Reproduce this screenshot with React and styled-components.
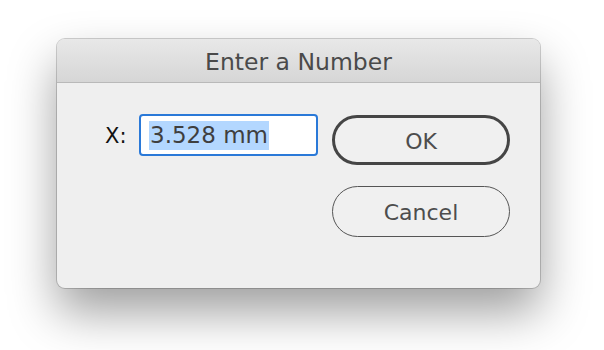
import React from "react";
import styled, { createGlobalStyle } from "styled-components";

const Global = createGlobalStyle`
  html, body { margin: 0; padding: 0; background: #ffffff; }
  body { font-family: "DejaVu Sans", "Open Sans", sans-serif; }
`;

const Page = styled.div`
  width: 604px;
  height: 350px;
  box-sizing: border-box;
  padding: 39px 0 0 57px;
  overflow: hidden;
  background: #ffffff;
`;

const Dialog = styled.div`
  width: 483px;
  height: 249px;
  border-radius: 8px;
  background: #efefef;
  box-shadow: 0 24px 48px rgba(0, 0, 0, 0.38), 0 0 0 1px rgba(0, 0, 0, 0.18);
  display: flex;
  flex-direction: column;
  overflow: hidden;
`;

const TitleBar = styled.div`
  height: 44px;
  flex: none;
  display: flex;
  align-items: center;
  justify-content: center;
  background: linear-gradient(#e8e8e8, #d6d6d6);
  border-bottom: 1px solid #b9b9b9;
  color: #4a4a4a;
  font-size: 23.5px;
  padding-top: 3px;
  box-sizing: border-box;
`;

const Body = styled.div`
  display: flex;
  align-items: flex-start;
  padding: 31px 31px 0 48px;
`;

const Field = styled.div`
  display: flex;
  align-items: center;
  gap: 12px;
  height: 42px;
`;

const Label = styled.label`
  font-size: 21px;
  color: #111;
  width: 22px;
  padding-top: 2px;
`;

const Input = styled.div`
  width: 179px;
  height: 42px;
  box-sizing: border-box;
  border: 2px solid #2a79d8;
  border-radius: 4px;
  background: #ffffff;
  display: flex;
  align-items: center;
  padding-left: 8px;
`;

const Selected = styled.span`
  background: #b3d7ff;
  color: #3f3f3f;
  font-size: 23px;
  line-height: 29px;
  padding: 0 1px;
`;

const Buttons = styled.div`
  margin-left: 14px;
  display: flex;
  flex-direction: column;
  gap: 21px;
`;

const Button = styled.button`
  width: 178px;
  height: ${(p) => (p.$default ? 50 : 51)}px;
  box-sizing: border-box;
  border-radius: 26px;
  background: #f0f0f0;
  border: ${(p) => (p.$default ? "3px solid #454545" : "1.5px solid #555555")};
  color: #4d4d4d;
  font-family: "DejaVu Sans", "Open Sans", sans-serif;
  font-size: 22px;
  padding: 2px 0 0;
  margin-top: ${(p) => (p.$default ? 1 : 0)}px;
`;

export default function App() {
  return (
    <>
      <Global />
      <Page>
        <Dialog>
          <TitleBar>Enter a Number</TitleBar>
          <Body>
            <Field>
              <Label>X:</Label>
              <Input>
                <Selected>3.528 mm</Selected>
              </Input>
            </Field>
            <Buttons>
              <Button $default>OK</Button>
              <Button>Cancel</Button>
            </Buttons>
          </Body>
        </Dialog>
      </Page>
    </>
  );
}
